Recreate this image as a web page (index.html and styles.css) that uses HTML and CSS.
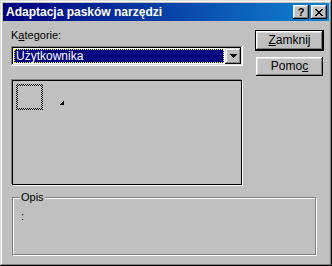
FILE: index.html
```html
<!DOCTYPE html>
<html lang="pl">
<head>
    <meta charset="UTF-8">
    <title>Adaptacja pasków narzędzi</title>
    <link rel="stylesheet" href="styles.css">
</head>
<body>
    <div class="window">
        <div class="titlebar">
            <span class="title">Adaptacja pasków narzędzi</span>
            <div class="title-buttons">
                <div class="tbtn help">?</div>
                <div class="tbtn close">
                    <svg width="8" height="7" viewBox="0 0 8 7" shape-rendering="crispEdges">
                        <path d="M0 0h2v1h1v1h2v-1h1v-1h2v1h-1v1h-1v1h-1v1h1v1h1v1h1v1h-2v-1h-1v-1h-2v1h-1v1h-2v-1h1v-1h1v-1h1v-1h-1v-1h-1v-1h-1z" fill="#000"/>
                    </svg>
                </div>
            </div>
        </div>

        <div class="dialog">
            <div class="left">
                <div class="field-label">K<u>a</u>tegorie:</div>
                <div class="combo">
                    <div class="combo-value">
                        <div class="selected">Użytkownika</div>
                    </div>
                    <div class="combo-btn">
                        <svg width="7" height="4" viewBox="0 0 7 4" shape-rendering="crispEdges">
                            <path d="M0 0h7v1h-1v1h-1v1h-1v1h-1v-1h-1v-1h-1v-1h-1z" fill="#000"/>
                        </svg>
                    </div>
                </div>
                <div class="toolbar-list">
                    <div class="slot"><div class="slot-inner"></div></div>
                    <svg class="marker" width="4" height="4" viewBox="0 0 4 4" shape-rendering="crispEdges">
                        <path d="M3 0h1v4h-4v-1h1v-1h1v-1h1z" fill="#000"/>
                    </svg>
                </div>
            </div>

            <div class="right">
                <div class="btn-default"><div class="btn"><u>Z</u>amknij</div></div>
                <div class="btn spaced">Pomo<u>c</u></div>
            </div>

            <fieldset class="group">
                <legend>Opis</legend>
                <div class="desc">:</div>
            </fieldset>
        </div>
    </div>
</body>
</html>
```

FILE: styles.css
```css
body {
    margin: 0;
    font-family: 'Liberation Sans', Arial, sans-serif;
    font-size: 11px;
    line-height: 13px;
    color: #000;
    background-color: #c0c0c0;
}

u {
    text-decoration-thickness: 1px;
    text-underline-offset: 1px;
}

.window {
    width: 332px;
    height: 266px;
    box-sizing: border-box;
    padding: 3px;
    background-color: #c0c0c0;
    overflow: hidden;
    box-shadow: inset -1px -1px #000, inset 1px 1px #dfdfdf, inset -2px -2px #808080, inset 2px 2px #fff;
}

.titlebar {
    height: 18px;
    display: flex;
    align-items: center;
    justify-content: space-between;
    padding: 0 2px 0 3px;
    background: linear-gradient(to right, #000080, #1084d0);
}

.title {
    color: #fff;
    font-weight: bold;
    font-size: 12px;
}

.title-buttons {
    display: flex;
    gap: 2px;
}

.tbtn {
    width: 16px;
    height: 14px;
    box-sizing: border-box;
    display: flex;
    align-items: center;
    justify-content: center;
    background-color: #c0c0c0;
    box-shadow: inset -1px -1px #000, inset 1px 1px #fff, inset -2px -2px #808080, inset 2px 2px #dfdfdf;
}

.help {
    font-weight: bold;
    font-size: 11px;
    line-height: 14px;
}

.dialog {
    display: grid;
    grid-template-columns: 232px 69px;
    column-gap: 12px;
    padding: 8px 5px 0 8px;
}

.left {
    display: flex;
    flex-direction: column;
}

.combo {
    margin-top: 4px;
    height: 20px;
    box-sizing: border-box;
    display: flex;
    padding: 2px;
    background-color: #fff;
    box-shadow: inset -1px -1px #fff, inset 1px 1px #808080, inset -2px -2px #dfdfdf, inset 2px 2px #000;
}

.combo-value {
    flex: 1;
    padding: 1px;
}

.selected {
    height: 100%;
    box-sizing: border-box;
    padding-left: 1px;
    background-color: #000080;
    color: #fff;
    border: 1px dotted #ffff00;
    line-height: 12px;
    font-size: 12px;
}

.combo-btn {
    width: 16px;
    display: flex;
    align-items: center;
    justify-content: center;
    background-color: #c0c0c0;
    box-shadow: inset -1px -1px #000, inset 1px 1px #dfdfdf, inset -2px -2px #808080, inset 2px 2px #fff;
}

.toolbar-list {
    margin: 14px 1px 0;
    height: 105px;
    box-sizing: border-box;
    display: flex;
    align-items: flex-start;
    padding: 3px;
    border: 1px solid #000;
    box-shadow: -1px -1px #808080, 1px 1px #fff;
}

.slot {
    width: 27px;
    height: 26px;
    box-sizing: border-box;
    padding: 2px;
    background: repeating-conic-gradient(#000 0 25%, #c0c0c0 0 50%) 0 0 / 2px 2px;
}

.slot-inner {
    height: 100%;
    background-color: #c0c0c0;
}

.marker {
    margin: 17px 0 0 17px;
}

.right {
    display: flex;
    flex-direction: column;
    padding-top: 1px;
}

.btn-default {
    border: 1px solid #000;
}

.btn {
    height: 19px;
    box-sizing: border-box;
    display: flex;
    align-items: center;
    justify-content: center;
    background-color: #c0c0c0;
    font-size: 12px;
    box-shadow: inset -1px -1px #000, inset 1px 1px #fff, inset -2px -2px #808080, inset 2px 2px #dfdfdf;
}

.spaced {
    margin: 6px 1px 0;
}

.group {
    grid-column: 1 / -1;
    margin: 6px 8px 0 1px;
    padding: 0 7px;
    border: 1px solid #808080;
    box-shadow: inset 1px 1px #fff, 1px 1px #fff;
}

.group legend {
    padding: 0 1px;
    background-color: #c0c0c0;
    line-height: 13px;
}

.desc {
    height: 50px;
    box-sizing: border-box;
    padding: 6px 0 0 1px;
}
```
